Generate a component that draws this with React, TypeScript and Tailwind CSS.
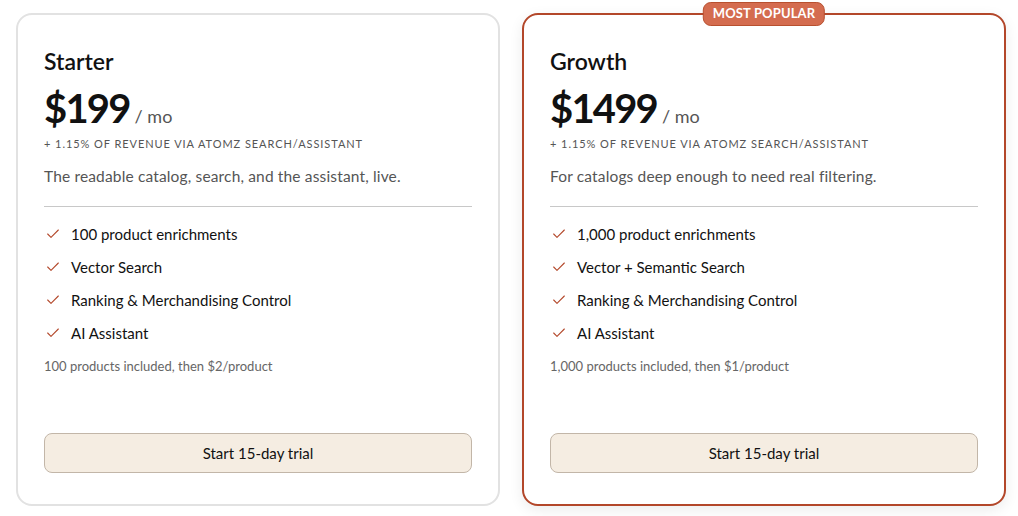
import { Check } from "lucide-react";

interface Plan {
  name: string;
  price: string;
  blurb: string;
  features: string[];
  note: string;
  popular?: boolean;
}

const plans: Plan[] = [
  {
    name: "Starter",
    price: "$199",
    blurb: "The readable catalog, search, and the assistant, live.",
    features: [
      "100 product enrichments",
      "Vector Search",
      "Ranking & Merchandising Control",
      "AI Assistant",
    ],
    note: "100 products included, then $2/product",
  },
  {
    name: "Growth",
    price: "$1499",
    blurb: "For catalogs deep enough to need real filtering.",
    features: [
      "1,000 product enrichments",
      "Vector + Semantic Search",
      "Ranking & Merchandising Control",
      "AI Assistant",
    ],
    note: "1,000 products included, then $1/product",
    popular: true,
  },
];

const PlanCard = ({ plan }: { plan: Plan }) => {
  return (
    <div
      className={
        "relative flex flex-col w-[484px] h-[493px] rounded-2xl border-2 bg-white px-[26px] pt-[32px] pb-[31px] " +
        (plan.popular
          ? "border-[#b3472a] shadow-[0_4px_14px_rgba(0,0,0,0.08)]"
          : "border-[#e2e2e2]")
      }
    >
      {plan.popular && (
        <div className="absolute -top-[13px] left-1/2 -translate-x-1/2 rounded-lg border border-[#b8502f] bg-[#d46c4f] px-[9px] pt-[2px] pb-[3px] text-[13px] font-bold leading-[17px] tracking-[0.01em] text-white">
          MOST POPULAR
        </div>
      )}

      <h3 className="text-[23px] font-semibold leading-7 text-[#111]">{plan.name}</h3>

      <div className="mt-[11px] flex items-baseline gap-[5px]">
        <span className="text-[40px] font-bold leading-[44px] tracking-[-0.045em] text-[#111]">
          {plan.price}
        </span>
        <span className="text-[18px] text-[#555]">/ mo</span>
      </div>

      <p className="mt-[6px] text-[11px] uppercase tracking-[0.085em] text-[#555]">
        + 1.15% of revenue via Atomz Search/Assistant
      </p>

      <p className="mt-[12px] text-[15.5px] tracking-[0.01em] text-[#555]">{plan.blurb}</p>

      <div className="mt-[18px] h-px bg-[#c8c8c8]" />

      <ul className="mt-[16px] flex flex-col gap-[11px]">
        {plan.features.map((f) => (
          <li key={f} className="flex items-center gap-[10px] text-[15px] leading-[22px] text-[#111]">
            <Check size={16} strokeWidth={1.6} className="ml-[1px] text-[#b3472a]" />
            {f}
          </li>
        ))}
      </ul>

      <p className="mt-[13px] text-[13px] text-[#666]">{plan.note}</p>

      <button className="mt-auto h-[40px] w-full rounded-lg border border-[#c2b6a8] bg-[#f5ede2] text-[15px] text-[#111]">
        Start 15-day trial
      </button>
    </div>
  );
};

export default function App() {
  return (
    <div
      className="flex gap-[22px] bg-white pl-[16px] pt-[13px] w-[1018px] h-[516px]"
      style={{ fontFamily: "Lato, 'Open Sans', sans-serif" }}
    >
      {plans.map((p) => (
        <PlanCard key={p.name} plan={p} />
      ))}
    </div>
  );
}
